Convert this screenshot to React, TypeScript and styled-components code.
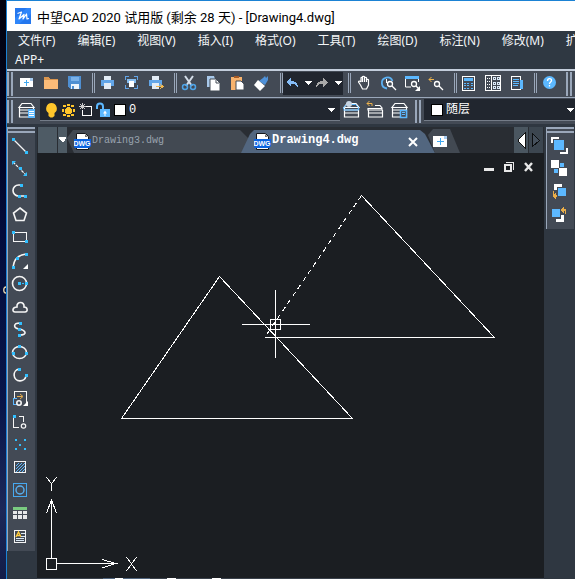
import React from "react";
import styled, { createGlobalStyle } from "styled-components";

const C = {
  bar: "#434a55",
  frame: "#2f3741",
  field: "#21262f",
  line: "#9aa7ba",
  blue: "#5cb8ff",
  white: "#ffffff",
  canvas: "#1b1e22",
};

const Global = createGlobalStyle`
  * { box-sizing: border-box; }
  body { margin: 0; background: ${C.frame}; font-family: "Noto Sans", "Noto Sans CJK SC", sans-serif; font-size: 12px; }
  button { border: 0; padding: 0; margin: 0; background: none; color: inherit; font: inherit; display: block; flex: none; }
  svg { display: block; flex: none; }
`;

const Desktop = styled.div`
  display: flex;
  min-height: 100vh;
  overflow: hidden;
  background: linear-gradient(#02030f 0, #02041c 18%, #030c3c 40%, #08164a 70%, #1c2858 88%, #121c48 100%);
`;
const Edge = styled.div`
  width: 6px;
  flex: none;
  display: flex;
  flex-direction: column;
  justify-content: center;
  align-items: flex-end;
`;
const Window = styled.div`
  flex: 1;
  min-width: 0;
  display: flex;
  flex-direction: column;
  border: 0 solid #1b82d4;
  border-width: 1px 0 0 1px;
  background: ${C.frame};
`;
const TitleBar = styled.header`
  height: 30px;
  display: flex;
  align-items: center;
  gap: 6px;
  padding-left: 8px;
  background: #fff;
  color: #000;
  font: 13px Roboto, "Noto Sans CJK SC", sans-serif;
  white-space: nowrap;
`;
const MenuRow = styled.nav<{ $pad: number }>`
  display: flex;
  height: 19px;
  overflow: hidden;
  padding-left: ${(p) => p.$pad}px;
  gap: 22px;
  color: #f4f6f8;
  background: #2f3842;
`;
const MenuItem = styled.button`
  line-height: 19px;
  white-space: nowrap;
`;
const Bar = styled.div<{ $first?: boolean }>`
  display: flex;
  height: ${(p) => (p.$first ? 28 : 27)}px;
  border-top: ${(p) => (p.$first ? "2px solid #c3cddb" : `1px solid ${C.line}`)};
  padding-top: ${(p) => (p.$first ? 0 : 1)}px;
  background: ${C.bar};
  overflow: hidden;
`;
const Grip = styled.span<{ $gap?: number }>`
  width: 6px;
  flex: none;
  align-self: stretch;
  margin: 1px 2px 1px ${(p) => p.$gap ?? 1}px;
  border: 0 solid ${C.line};
  border-width: 0 2px;
`;
const Sep = styled.span<{ $wide?: boolean }>`
  width: 3px;
  height: 20px;
  flex: none;
  margin: 2px 0 0 ${(p) => (p.$wide ? 7 : 5)}px;
  border: 0 solid ${C.line};
  border-width: 0 1px;
`;
const ToolButton = styled.button<{ $w?: number }>`
  width: ${(p) => p.$w ?? 24}px;
  height: 24px;
  overflow: hidden;
`;
const UndoBox = styled.div`
  display: flex;
  height: 23px;
  margin-top: 1px;
  background: ${C.field};
`;
const Field = styled.label<{ $width?: number }>`
  display: flex;
  align-items: center;
  height: 22px;
  flex: ${(p) => (p.$width ? `0 1 ${p.$width}px` : "1 0 60px")};
  margin-left: 1px;
  padding-left: ${(p) => (p.$width ? 3 : 7)}px;
  background: ${C.field};
  border-bottom: 1px solid #747c88;
  overflow: hidden;
`;
const Swatch = styled.span<{ $gap?: number }>`
  width: 12px;
  height: 12px;
  flex: none;
  margin-left: ${(p) => p.$gap ?? 0}px;
  background: #fff;
  border: 1px solid #000;
`;
const Choice = styled.select`
  appearance: none;
  flex: 1;
  min-width: 0;
  margin-left: 3px;
  padding: 0;
  border: 0;
  background: none;
  color: #fff;
  font: 12px "Liberation Mono", "Noto Sans CJK SC", monospace;
`;
const Work = styled.div`
  flex: 1;
  display: flex;
  padding-top: 3px;
`;
const SideBar = styled.aside`
  align-self: flex-start;
  flex: none;
  width: 28px;
  padding: 7px 0 3px 1px;
  margin-right: 2px;
  border-left: 1px solid ${C.line};
  background:
    linear-gradient(${C.line}, ${C.line}) 0 0 / 100% 2px no-repeat,
    linear-gradient(${C.line}, ${C.line}) 0 4px / 100% 2px no-repeat,
    ${C.bar};
`;
const RightSide = styled(SideBar)`
  margin: 0 1px 0 2px;
`;
const SideButton = styled.button`
  width: 23px;
  height: 23px;
`;
const Main = styled.main`
  flex: 1;
  min-width: 0;
  display: flex;
  flex-direction: column;
  background: ${C.canvas};
`;
const TabStrip = styled.div`
  display: flex;
  height: 26px;
  align-items: flex-end;
  background: #292d33;
  padding-left: 1px;
`;
const StripButton = styled.button<{ $w: number; $bg: string }>`
  width: ${(p) => p.$w}px;
  height: 26px;
  margin-right: 1px;
  background: ${(p) => p.$bg};
`;
const Tab = styled.button<{ $active?: boolean }>`
  display: flex;
  align-items: center;
  gap: 1px;
  height: 23px;
  flex: 0 1 ${(p) => (p.$active ? 194 : 182)}px;
  min-width: 0;
  margin-left: ${(p) => (p.$active ? -8 : -1)}px;
  padding: 0 17px 0 ${(p) => (p.$active ? 13 : 7)}px;
  background: ${(p) => (p.$active ? "#52667f" : "#424952")};
  color: ${(p) => (p.$active ? "#fff" : "#98a2ae")};
  font: ${(p) => (p.$active ? "bold 12px" : "10px")} "Liberation Mono", monospace;
  clip-path: ${(p) =>
    p.$active
      ? "polygon(0 100%, 9px 4px, 13px 0, calc(100% - 15px) 0, calc(100% - 10px) 4px, 100% 100%)"
      : "polygon(0 8px, 6px 0, calc(100% - 9px) 0, 100% 9px, 100% 100%, 7px 100%)"};
`;
const TabLabel = styled.span`
  flex: 1;
  padding-bottom: 3px;
  text-align: left;
  white-space: nowrap;
`;
const NewTab = styled.button`
  width: 32px;
  height: 24px;
  margin-left: -7px;
  margin-right: auto;
  background: #424952;
  clip-path: polygon(0 6px, 5px 0, 22px 0, 32px 100%, 7px 100%);
`;
const Canvas = styled.section`
  position: relative;
  flex: 1;
  display: flex;
  overflow: hidden;
  min-height: 425px;
`;
const WindowControls = styled.div`
  position: absolute;
  top: 8px;
  right: 9px;
  display: flex;
  gap: 8px;
`;
const Ucs = styled.div`
  position: absolute;
  left: 7px;
  bottom: 6px;
`;
const LayoutEdge = styled.footer`
  height: 1px;
  background: linear-gradient(90deg, #3a414b 66px, #52667f 66px, #52667f 78px, #fff 78px, #fff 86px, #52667f 86px, #52667f 113px, #3a414b 113px, #3a414b 130px, #fff 130px, #fff 139px, #3a414b 139px, #3a414b 175px, #fff 175px, #fff 184px, #3a414b 184px);
`;

type IconProps = { w?: number; h?: number; children: React.ReactNode; smooth?: boolean };
const Icon = ({ w = 24, h = 24, children, smooth }: IconProps) => (
  <svg width={w} height={h} viewBox={`0 0 ${w} ${h}`} fill="none" shapeRendering={smooth ? "auto" : "crispEdges"} aria-hidden="true">
    {children}
  </svg>
);

const Printer = () => (
  <>
    <path d="M9 5h7v4H9z" fill="#e2ebf5" />
    <path d="M6 9h13v6H6z" fill="#62a5e8" />
    <path d="M9 12h7v6H9z" fill="#e2ebf5" />
  </>
);
const Lens = ({ x, y }: { x: number; y: number }) => (
  <g stroke="#fff" strokeWidth="1.3">
    <circle cx={x} cy={y} r="2.500" fill={C.bar} />
    <path d={`M${x + 2} ${y + 2}l4 4`} />
  </g>
);
const Stack = () => <path d="M7 4.500h9l3 4H4zM4.500 8v3h14V8M4.500 11v3h14v-3M4.500 14v4h14v-4" stroke="#fff" strokeWidth="1.200" />;

const fileTools: [string, React.ReactNode][] = [
  ["新建", <><path d="M5 7h10l3 3v6H5z" fill="#fff" /><path d="M15 7h3v3h-3z" fill="#a8cdf2" /><path d="M11.500 9v6M9 11.500h5" stroke="#40a8f0" /></>],
  ["打开", <><path d="M5 6h5l1 2h8v10H5z" fill="#d9954f" /><path d="M5 9h14v9H5z" fill="#fbbb78" /></>],
  ["保存", <><path d="M5 5h13v13H7l-2-2z" fill="#4f8fd2" /><path d="M8 6h8v4H8z" fill="#79b0e8" /><path d="M8 13h8v5H8z" fill="#eef4fb" /><path d="M9 15h2v3H9z" fill="#4f8fd2" /></>],
];
const printTools: [string, React.ReactNode][] = [
  ["打印", <Printer />],
  ["打印预览", <><path d="M6.500 9V5.500H10M15 5.500h3.500V9M18.500 14v3.500H15M10 17.500H6.500V14" stroke="#62a5e8" /><path d="M8 8h9v4H8z" fill="#86bdf0" /><path d="M10 10h5v6h-5z" fill="#fff" /></>],
  ["发布", <><Printer /><path d="M13 15.500h7M17 13l3 2.500-3 2.500" stroke="#f0b64e" /></>],
];
const editTools: [string, React.ReactNode][] = [
  ["剪切", <><path d="M8 5l7 10M16 5L9 15" stroke="#d5deea" strokeWidth="2" /><circle cx="8" cy="16" r="2.500" stroke="#4ea4e8" strokeWidth="1.500" /><circle cx="16" cy="16" r="2.500" stroke="#4ea4e8" strokeWidth="1.500" /></>],
  ["复制", <><path d="M6 5h7l1 3v8H6z" fill="#a8c8ea" /><path d="M9 8h6l4 4v8H9z" fill="#fff" stroke={C.bar} /><path d="M15 9v3h3" stroke={C.bar} /></>],
  ["粘贴", <><path d="M6 6h11v13H6z" fill="#f9b36d" /><path d="M9 5h5v2H9z" fill="#a55b28" /><path d="M11 10h5l3 3v6h-8z" fill="#fff" stroke={C.bar} /></>],
  ["特性匹配", <><path d="M14 7l2-2 1 2 2-2v4l-3 5-6-4z" fill="#4f91d8" /><path d="M9 9l7 6-5 5-6-6z" fill="#fff" /></>],
];
const viewTools: [string, React.ReactNode][] = [
  ["平移", <path d="M9.500 14l-2-3c0-1.500 2-1 2.500 0V7c0-1 1.500-1 1.500 0v-1c0-1 2-1 2 0v1c0-1 2-1 2 0v2c0-1 2-1 2 0v5l-2 4h-4zM11.500 7v4M13.500 7v4M15.500 8v3" stroke="#fff" strokeWidth="1.200" />],
  ["实时缩放", <><path d="M12 17.500A5.500 5.500 0 1 1 17.500 10" stroke="#5cb0f2" strokeWidth="1.800" /><path d="M11.500 8v4" stroke="#fff" /><Lens x={15} y={13} /></>],
  ["窗口缩放", <><path d="M6 5h14v3H6z" fill={C.blue} /><path d="M6.500 8v8H12M19.500 8v3" stroke="#fff" /><Lens x={15} y={13} /><path d="M21 15v5h-5z" fill="#fff" /></>],
  ["缩放上一个", <><path d="M6 8.500h5M8.500 6L6 8.500 8.500 11" stroke="#f0b64e" /><Lens x={14} y={13} /></>],
];
const paletteTools: [string, React.ReactNode][] = [
  ["特性", <><path d="M5.500 5.500h12v14h-12z" stroke="#fff" /><path d="M7 7h9v3H7z" fill={C.blue} /><path d="M7 12.500h5M7 14.500h5M7 17.500h5M14 12.500h2M14 14.500h2M14 17.500h2" stroke={C.blue} strokeDasharray="2 1" /></>],
  ["设计中心", <><path d="M4.500 4.500h15v15h-15zM10.500 4v16" stroke="#fff" /><path d="M6 7.500h3M6 10.500h3M6 13.500h3M6 16.500h3" stroke="#fff" strokeDasharray="1 1" /><path d="M12.500 6.500h2v2h-2zM16.500 6.500h2v2h-2zM12.500 11h2v2h-2zM16.500 11h2v2h-2zM12.500 15.500h2v2h-2zM16.500 15.500h2v2h-2z" stroke="#dceaf8" /></>],
  ["工具选项板", <><path d="M6.500 5.500h9v13h-9z" stroke="#fff" /><path d="M15 9h3v9h-3z" fill={C.blue} /><path d="M8 8.500h6M8 10.500h6M8 12.500h6M8 14.500h5" stroke={C.blue} /></>],
];

const Dot = ({ at }: { at: [number, number][] }) => (
  <>{at.map(([x, y]) => <path key={`${x}-${y}`} d={`M${x - 1} ${y - 1}h3v3h-3z`} fill="#32bfff" shapeRendering="crispEdges" />)}</>
);
const w = { stroke: "#f5f5f5", strokeWidth: 1.6 };
const thin = { stroke: "#f5f5f5", strokeWidth: 1, shapeRendering: "crispEdges" as const };
const drawTools: [string, React.ReactNode][] = [
  ["直线", <><path d="M4 5l14 14" {...w} strokeWidth={1.2} /><Dot at={[[4, 5], [17, 18]]} /></>],
  ["构造线", <><path d="M4 5l14 14" {...w} strokeDasharray="3 1" strokeWidth={1.2} /><path d="M3 4h4L3 8zM18 19v-4l-4 4z" fill="#32bfff" /><Dot at={[[11, 11]]} /></>],
  ["多段线", <><path d="M12 5H9.500a5.500 5.500 0 0 0 0 11H16" {...w} /><Dot at={[[12, 5], [10, 16], [16, 16]]} /></>],
  ["正多边形", <path d="M11 5l6.500 5-2.500 7.500H7L4.500 10z" {...w} />],
  ["矩形", <><path d="M4.500 6.500h13v9h-13z" {...thin} /><Dot at={[[4, 6], [17, 15]]} /></>],
  ["圆弧", <><path d="M4 18C5 10 9 6 17 5" {...w} /><Dot at={[[4, 18], [8, 9], [17, 5]]} /><path d="M19 15v5h-5z" fill="#fff" /></>],
  ["圆", <><circle cx="10.500" cy="11.500" r="7" {...w} /><path d="M10 11.500h7" stroke="#32bfff" strokeDasharray="2 1" /><Dot at={[[10, 11], [17, 11]]} /></>],
  ["修订云线", <path d="M6 17h10c3 0 3-5-1-5 1-6-8-6-7 0-5 0-5 5-2 5z" {...w} />],
  ["样条曲线", <><path d="M11 5c-7 0-7 5-1 6s10 6 0 6" {...w} /><Dot at={[[11, 5], [10, 11], [10, 17]]} /></>],
  ["椭圆", <><ellipse cx="10.500" cy="11.500" rx="7" ry="6" {...w} /><Dot at={[[10, 5], [4, 12], [17, 12]]} /></>],
  ["椭圆弧", <><path d="M10 5a6 6 0 1 0 7 7" {...w} /><Dot at={[[10, 5], [17, 11]]} /></>],
  ["插入块", <><path d="M5.500 11V4.500h12v11" {...thin} /><path d="M8 11.500H4.500v6H8" stroke={C.blue} shapeRendering="crispEdges" /><circle cx="10" cy="16" r="2.200" {...w} /><path d="M8 9.500h5M11 7l3 2.500-3 2.500" stroke="#e8ae4c" /><path d="M19 14v5h-5z" fill="#fff" /></>],
  ["创建块", <><path d="M7 6.500H4.500v11H10M10 6.500h4.500V12" {...thin} /><circle cx="14.500" cy="16" r="2.200" {...w} strokeWidth={1.2} /><Dot at={[[5, 6]]} /></>],
  ["点", <g shapeRendering="crispEdges">{[[6, 6], [15, 6], [10, 11], [6, 15], [15, 15]].map(([x, y]) => <path key={`${x}${y}`} d={`M${x} ${y}h2v2h-2z`} fill="#32bfff" />)}</g>],
  ["图案填充", <><path d="M5.500 5.500h11v11h-11z" {...thin} /><path d="M7 10l3-3M7 13l6-6M7 16l9-9M10 16l6-6M13 16l3-3" stroke={C.blue} /></>],
  ["面域", <><path d="M4.500 4.500h13v13h-13z" stroke="#46a9f0" shapeRendering="crispEdges" /><circle cx="11" cy="11" r="4" stroke="#5ab0ef" strokeWidth="1.400" /></>],
  ["表格", <><path d="M4 5h14v3H4z" fill="#7acb80" /><path d="M4 9h4v3H4zM9 9h4v3H9zM14 9h4v3h-4zM4 13h4v4H4zM9 13h4v4H9zM14 13h4v4h-4z" fill="#e6e8ea" /></>],
  ["多行文字", <><path d="M5.500 5.500h11v12h-11z" {...thin} /><path d="M7 12l2.500-5 2.500 5M8 10.500h3" stroke="#ffcb3c" strokeWidth="1.400" /><path d="M12 8.500h4M12 11.500h4M7 13.500h8M7 15.500h8" stroke="#dbe9f5" shapeRendering="crispEdges" /></>],
];
const orderTools: [string, React.ReactNode][] = [
  ["前置", <><path d="M4 9V4h7M19 14v5h-7" stroke="#fff" strokeWidth="2" /><path d="M6 6h10v10H6z" fill={C.blue} /></>],
  ["后置", <><path d="M3 3h8v8H3zM11 11h8v8h-8z" fill="#fff" /><path d="M12 6h4v4h-4zM6 12h4v4H6z" fill={C.blue} /></>],
  ["置于对象之上", <><path d="M7 10V5h7" stroke="#fff" strokeWidth="3" /><path d="M10 8h8v8h-8z" fill={C.blue} /><path d="M5.500 11v5h3M8 13.500L5.500 16 8 18.500" stroke="#e9ad48" strokeWidth="1.400" /></>],
  ["置于对象之下", <><path d="M14 12v5H8" stroke="#fff" strokeWidth="3" /><path d="M4 6h8v8H4z" fill={C.blue} /><path d="M17.500 11V7h-4M16 4.500L13.500 7 16 9.500" stroke="#e9ad48" strokeWidth="1.400" /></>],
];

const Tools = ({ items }: { items: [string, React.ReactNode][] }) => (
  <>{items.map(([name, art]) => <ToolButton key={name} aria-label={name}><Icon smooth={items === editTools || items === viewTools}>{art}</Icon></ToolButton>)}</>
);
const SideTools = ({ items }: { items: [string, React.ReactNode][] }) => (
  <>{items.map(([name, art]) => <SideButton key={name} aria-label={name}><Icon w={23} h={23} smooth={items === drawTools}>{art}</Icon></SideButton>)}</>
);

const DwgIcon = () => (
  <svg width="17" height="18" viewBox="0 0 17 18" aria-hidden="true">
    <path d="M2.500 .5h9l3 3v13h-12z" fill="#fff" stroke="#15181c" />
    <path d="M11 1v3h3z" fill="#777" />
    <path d="M0 6h17v7l-2 2H1l-1-1z" fill="#0a63e0" />
    <text x="8" y="13" textAnchor="middle" fontFamily="Liberation Sans, sans-serif" fontSize="7" fontWeight="bold" fill="#fff">DWG</text>
  </svg>
);

const menus = ["文件(F)", "编辑(E)", "视图(V)", "插入(I)", "格式(O)", "工具(T)", "绘图(D)", "标注(N)", "修改(M)", "扩展工具(X)"];

export default function App() {
  return (
    <Desktop>
      <Global />
      <Edge>
        <Icon w={3} h={8} smooth><path d="M3 1C0 1 0 7 3 7" stroke="#e9d9b0" strokeWidth="1.300" /></Icon>
      </Edge>
      <Window>
        <TitleBar>
          <Icon w={16} h={16} smooth>
            <path d="M0 0h16v16H0z" fill="#2477ee" />
            <path d="M0 10L12 0h4v6L4 16H0z" fill="#2f86fa" />
            <path d="M2.500 5.500l4-1.500-2.500 7 5-4.500-1 4.500 3.500-5 .5 5 2-.5" stroke="#fff" strokeWidth="1.200" strokeLinejoin="round" />
          </Icon>
          <span>中望CAD 2020 试用版 (剩余 28 天) - [Drawing4.dwg]</span>
        </TitleBar>
        <MenuRow $pad={11}>{menus.map((m) => <MenuItem key={m}>{m}</MenuItem>)}</MenuRow>
        <MenuRow $pad={8}><MenuItem>APP+</MenuItem></MenuRow>

        <Bar $first>
          <Grip $gap={0} />
          <Tools items={fileTools} />
          <Sep />
          <Tools items={printTools} />
          <Sep $wide />
          <Tools items={editTools} />
          <Sep $wide />
          <UndoBox>
            <ToolButton $w={18} aria-label="放弃"><Icon w={18}><path d="M3 10l5-4v3c5 0 7 2 7 7-1-3-3-4-7-4v3z" fill="#86bdf8" /></Icon></ToolButton>
            <ToolButton $w={12} aria-label="放弃列表"><Icon w={12}><path d="M3 9h8l-4 4z" fill="#fff" /></Icon></ToolButton>
            <ToolButton $w={18} aria-label="重做"><Icon w={18}><path d="M15 10l-5-4v3c-5 0-7 2-7 7 1-3 3-4 7-4v3z" fill="#a9a9a9" /></Icon></ToolButton>
            <ToolButton $w={12} aria-label="重做列表"><Icon w={12}><path d="M3 9h8l-4 4z" fill="#fff" /></Icon></ToolButton>
          </UndoBox>
          <Sep />
          <Tools items={viewTools} />
          <Sep $wide />
          <Tools items={paletteTools} />
          <Sep />
          <ToolButton aria-label="帮助">
            <Icon smooth>
              <circle cx="12.500" cy="11.500" r="6.500" fill={C.blue} />
              <path d="M10.500 10c0-3 4-3 4-.5 0 1.500-2 1.500-2 3.500M12.500 14v1.500" stroke="#fff" strokeWidth="1.300" />
            </Icon>
          </ToolButton>
          <Grip $gap={5} />
        </Bar>

        <Bar>
          <Grip $gap={0} />
          <ToolButton aria-label="图层特性管理器"><Icon smooth><Stack /><path d="M13 10h7v9h-7z" fill={C.blue} /><path d="M14 12.500h5M14 14.500h5M14 16.500h5" stroke="#fff" /></Icon></ToolButton>
          <Field $width={300}>
            <Icon w={17} h={20} smooth><path d="M8.500 3a5.500 5.500 0 0 1 3 10v3l-2 1.500h-2l-2-1.500v-3a5.500 5.500 0 0 1 3-10z" fill="#ffc62b" /></Icon>
            <Icon w={17} h={20}>
              <circle cx="8.500" cy="10.500" r="3.500" fill="#ffc62b" />
              <path d="M7 4h3v2H7zM7 15h3v2H7zM2 9h2v3H2zM13 9h2v3h-2zM3 5h3v2H3zM11 5h3v2h-3zM3 14h3v2H3zM11 14h3v2h-3z" fill="#ffc62b" />
            </Icon>
            <Icon w={17} h={20}>
              <path d="M8 6.500h6.500v9h-9V10" stroke="#fff" />
              <path d="M5.500 3v6M2 6.500h7M3 4l5 5M8 4L3 9" stroke="#ccc" />
            </Icon>
            <Icon w={17} h={20} smooth>
              <path d="M3 9V6.500c0-4 6-4 6 0V10" stroke={C.blue} strokeWidth="2" />
              <path d="M6 9h10v8H6z" fill={C.blue} />
              <path d="M11 10.500l2 3h-1.500V16h-1v-2.500H9z" fill="#fff" />
            </Icon>
            <Swatch $gap={3} />
            <Choice aria-label="图层"><option>0</option></Choice>
            <Icon w={14} h={20}><path d="M1 8h8l-4 4z" fill="#fff" /></Icon>
          </Field>
          <ToolButton aria-label="将对象的图层置为当前"><Icon smooth><Stack /><path d="M3.500 10V9l3-3.500h9l3 3V11h-15" stroke={C.blue} /><circle cx="9" cy="5" r="3" fill="#c7d5e4" /></Icon></ToolButton>
          <ToolButton aria-label="上一个图层"><Icon smooth><path d="M11 6.500h5l2 2.500v2h-14V9.500h14M4.500 11v3h14v-3M4.500 14v4h14v-4" stroke="#fff" strokeWidth="1.200" /><path d="M3 4.500h5V7M5.500 2L3 4.500 5.500 7" stroke="#edb34d" /></Icon></ToolButton>
          <ToolButton aria-label="图层状态"><Icon smooth><Stack /><path d="M12.500 11.500h6v7h-6z" fill={C.bar} stroke={C.blue} strokeWidth="1.500" /><path d="M14 13.500h3M14 15.500h3" stroke={C.blue} /></Icon></ToolButton>
          <Grip $gap={3} />
          <Field>
            <Swatch />
            <Choice aria-label="颜色"><option>随层</option></Choice>
            <Icon w={9} h={20}><path d="M0 8h8l-4 4z" fill="#fff" /></Icon>
          </Field>
        </Bar>

        <Work>
          <SideBar aria-label="绘图"><SideTools items={drawTools} /></SideBar>
          <Main>
            <TabStrip>
              <StripButton $w={19} $bg="#4e5b65" aria-label="图纸" />
              <StripButton $w={9} $bg="#4e5b65" aria-label="图纸列表"><Icon w={9} h={26}><path d="M1 10h7v1L6 15H4L1 11z" fill="#fff" /></Icon></StripButton>
              <Tab><DwgIcon /><TabLabel>Drawing3.dwg</TabLabel></Tab>
              <Tab $active>
                <DwgIcon /><TabLabel>Drawing4.dwg</TabLabel>
                <svg width="10" height="10" viewBox="0 0 10 10" aria-hidden="true"><path d="M1 1l8 8M9 1L1 9" stroke="#fff" strokeWidth="2" /></svg>
              </Tab>
              <NewTab aria-label="新建图纸">
                <Icon w={32}><path d="M5 7h10l4 3v8H5z" fill="#fff" /><path d="M16 7h3v3h-3z" fill="#a8cdf2" /><path d="M12.500 9v7M9 12.500h7" stroke="#40a8f0" /></Icon>
              </NewTab>
              <StripButton $w={14} $bg="#4a5660" aria-label="向左滚动"><Icon w={14} h={26}><path d="M11 6v15l-7-7v-1z" fill="#fff" stroke="#111" /></Icon></StripButton>
              <StripButton $w={14} $bg="#3c4650" aria-label="向右滚动"><Icon w={14} h={26}><path d="M3.500 6.500v13l7-6z" fill="#46515d" stroke="#0c0e10" /></Icon></StripButton>
            </TabStrip>
            <Canvas aria-label="绘图区">
              <svg width="507" height="425" viewBox="0 0 507 425" fill="none" stroke="#fff" shapeRendering="crispEdges" role="img" aria-label="三角形">
                <path d="M182.500 123.500L84.500 265.500H315.500Z" />
                <path d="M227.500 184.500H457.500L324.500 42.500" />
                <path d="M324.500 42.500L227.500 184.500" strokeDasharray="5 4" />
                <path d="M205 171.500h68M238.500 137v68M233.500 166.500h10v10h-10z" />
              </svg>
              <WindowControls>
                <button aria-label="最小化"><Icon w={12} h={12}><path d="M1 7h10v3H1z" fill="#e8e8e8" /></Icon></button>
                <button aria-label="还原"><Icon w={12} h={12}><path d="M3 1.500h7.500V9" stroke="#e8e8e8" /><path d="M2 4h6v6H2z" stroke="#e8e8e8" strokeWidth="2" /></Icon></button>
                <button aria-label="关闭"><Icon w={12} h={12} smooth><path d="M2 2l7 8M9 2L2 10" stroke="#e8e8e8" strokeWidth="2.400" /></Icon></button>
              </WindowControls>
              <Ucs>
                <svg width="100" height="96" viewBox="0 0 100 96" fill="none" stroke="#fff" shapeRendering="crispEdges" role="img" aria-label="坐标轴 X Y">
                  <path d="M7.500 82V24M2.500 37L7.500 24l5 13M2.500 82.500h10v11h-10zM13 87.500h58M58 83.500l14 4-14 4.500" />
                  <path d="M2.500 1l5 7 5-7M7.500 8v7M82.500 81l10 14M92.500 81l-10 14" />
                </svg>
              </Ucs>
            </Canvas>
            <LayoutEdge />
          </Main>
          <RightSide aria-label="绘图次序"><SideTools items={orderTools} /></RightSide>
        </Work>
      </Window>
    </Desktop>
  );
}
